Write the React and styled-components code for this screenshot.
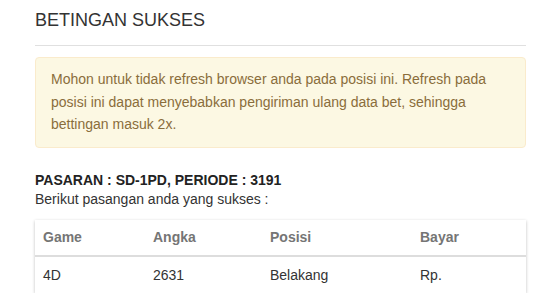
import styled, { createGlobalStyle } from 'styled-components';

const GlobalStyle = createGlobalStyle`
  body {
    margin: 0;
    background: #fff;
    font-family: "Liberation Sans", Arial, sans-serif;
    font-size: 14px;
    color: #333;
  }
`;

const Page = styled.div`
  width: 491px;
  padding: 10px 0 0 35px;
`;

const Title = styled.h4`
  margin: 0;
  font-size: 18px;
  font-weight: 400;
  line-height: 20px;
  color: #333;
`;

const Divider = styled.hr`
  margin: 15px 0 11px;
  border: 0;
  border-top: 1px solid #e0e0e0;
`;

const Alert = styled.div`
  background: #fcf8e3;
  border: 1px solid #faebcc;
  border-radius: 4px;
  color: #8a6d3b;
  padding: 10px 15px 11px;
  font-size: 14px;
  line-height: 22.5px;
`;

const Market = styled.div`
  margin-top: 23px;
  font-weight: 700;
  line-height: 19px;
  color: #222;
`;

const Note = styled.div`
  line-height: 19px;
  color: #333;
`;

const Card = styled.div`
  margin-top: 11px;
  background: #fff;
  box-shadow: 0 1px 3px rgba(0, 0, 0, 0.25);
`;

const Table = styled.table`
  width: 100%;
  border-collapse: collapse;
  table-layout: fixed;
`;

const Head = styled.th`
  box-sizing: border-box;
  width: ${(p) => p.$w || 'auto'};
  text-align: left;
  padding: 0 8px;
  height: 36px;
  font-weight: 700;
  color: #757575;
  border-bottom: 2px solid #ddd;
`;

const Cell = styled.td`
  padding: 0 8px;
  height: 36px;
  color: #333;
`;

const columns = [
  { label: 'Game', w: '110px' },
  { label: 'Angka', w: '117px' },
  { label: 'Posisi', w: '150px' },
  { label: 'Bayar' },
];

const rows = [['4D', '2631', 'Belakang', 'Rp.']];

const App = () => {
  return (
    <Page>
      <GlobalStyle />
      <Title>BETINGAN SUKSES</Title>
      <Divider />
      <Alert>
        Mohon untuk tidak refresh browser anda pada posisi ini. Refresh pada
        posisi ini dapat menyebabkan pengiriman ulang data bet, sehingga
        bettingan masuk 2x.
      </Alert>
      <Market>PASARAN : SD-1PD, PERIODE : 3191</Market>
      <Note>Berikut pasangan anda yang sukses :</Note>
      <Card>
        <Table>
          <thead>
            <tr>
              {columns.map((c) => (
                <Head key={c.label} $w={c.w}>
                  {c.label}
                </Head>
              ))}
            </tr>
          </thead>
          <tbody>
            {rows.map((r, i) => (
              <tr key={i}>
                {r.map((v, j) => (
                  <Cell key={j}>{v}</Cell>
                ))}
              </tr>
            ))}
          </tbody>
        </Table>
      </Card>
    </Page>
  );
};

export default App;
